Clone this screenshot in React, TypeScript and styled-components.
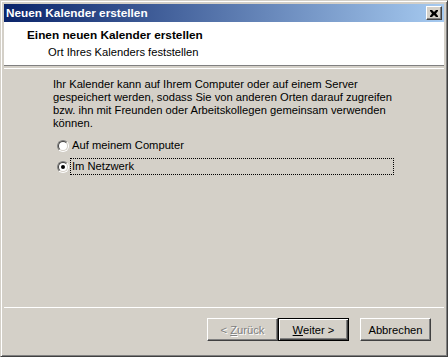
import React from "react";
import styled, { createGlobalStyle } from "styled-components";

const Global = createGlobalStyle`
  html, body { margin: 0; padding: 0; background: #d4d0c8; }
  body {
    font-family: "Liberation Sans", Arial, sans-serif;
    font-size: 11.2px;
    color: #000;
  }
`;

const Window = styled.div`
  box-sizing: border-box;
  width: 448px;
  height: 357px;
  background: #d4d0c8;
  border: 1px solid;
  border-color: #d4d0c8 #404040 #404040 #d4d0c8;
  box-shadow: inset 1px 1px #ffffff, inset -1px -1px #808080;
  padding: 3px;
  display: flex;
  flex-direction: column;
`;

const TitleBar = styled.div`
  height: 18px;
  flex: 0 0 18px;
  display: flex;
  align-items: center;
  justify-content: space-between;
  padding: 0 2px;
  background: linear-gradient(to right, #0a246a, #a6caf0);
`;

const TitleText = styled.span`
  color: #ffffff;
  font-weight: bold;
  font-size: 11.8px;
  line-height: 14px;
`;

const CloseButton = styled.div`
  box-sizing: border-box;
  width: 16px;
  height: 14px;
  background: #d4d0c8;
  border: 1px solid;
  border-color: #ffffff #404040 #404040 #ffffff;
  box-shadow: inset -1px -1px #808080;
  display: flex;
  align-items: center;
  justify-content: center;
`;

const Header = styled.div`
  height: 43px;
  flex: 0 0 43px;
  box-sizing: border-box;
  background: #ffffff;
  padding: 6px 0 0 23px;
  display: flex;
  flex-direction: column;
  gap: 3px;
`;

const HeaderTitle = styled.div`
  font-weight: bold;
  font-size: 11.8px;
  line-height: 14px;
`;

const HeaderSub = styled.div`
  line-height: 14px;
  padding-left: 21px;
`;

const Etched = styled.div<{ $top?: string }>`
  flex: 0 0 2px;
  height: 0;
  border-top: 1px solid ${(p) => p.$top ?? "#808080"};
  border-bottom: 1px solid #ffffff;
`;

const Body = styled.div`
  flex: 1;
  padding: 9px 0 0 49px;
  display: flex;
  flex-direction: column;
`;

const Paragraph = styled.p`
  margin: 0;
  line-height: 13px;
`;

const RadioGroup = styled.div`
  margin: 7px 0 0 4px;
  display: flex;
  flex-direction: column;
  gap: 4px;
`;

const RadioRow = styled.label`
  display: flex;
  align-items: center;
  height: 17px;
`;

const RadioOuter = styled.span`
  box-sizing: border-box;
  width: 12px;
  height: 12px;
  border-radius: 50%;
  border: 1px solid;
  border-color: #808080 #ffffff #ffffff #808080;
  display: flex;
`;

const RadioInner = styled.span`
  box-sizing: border-box;
  flex: 1;
  border-radius: 50%;
  border: 1px solid;
  border-color: #404040 #d4d0c8 #d4d0c8 #404040;
  background: #ffffff;
  display: flex;
  align-items: center;
  justify-content: center;
`;

const RadioDot = styled.span`
  width: 4px;
  height: 4px;
  border-radius: 50%;
  background: #000;
`;

const RadioLabel = styled.span<{ $focus?: boolean }>`
  box-sizing: border-box;
  margin-left: 1px;
  height: 17px;
  width: 324px;
  padding-left: 1px;
  line-height: 15px;
  border: 1px dotted ${(p) => (p.$focus ? "#000" : "transparent")};
`;

const Footer = styled.div`
  display: flex;
  flex-direction: column;
`;

const ButtonRow = styled.div`
  display: flex;
  justify-content: flex-end;
  padding: 10px 13px 12px 0;
`;

const Button = styled.button<{ $default?: boolean; $gapLeft?: number }>`
  box-sizing: border-box;
  width: 71px;
  height: 23px;
  margin: 0 0 0 ${(p) => p.$gapLeft ?? 0}px;
  padding: 0;
  background: #d4d0c8;
  font-family: "Liberation Sans", Arial, sans-serif;
  font-size: 11.2px;
  color: #000;
  border: 1px solid;
  border-color: ${(p) =>
    p.$default ? "#000" : "#ffffff #404040 #404040 #ffffff"};
  box-shadow: ${(p) =>
    p.$default
      ? "inset 1px 1px #ffffff, inset -1px -1px #404040, inset -2px -2px #808080"
      : "inset -1px -1px #808080"};
  &:disabled {
    color: #808080;
    text-shadow: 1px 1px #ffffff;
  }
  u {
    text-decoration: underline;
  }
`;

export default function App() {
  return (
    <>
      <Global />
      <Window>
        <TitleBar>
          <TitleText>Neuen Kalender erstellen</TitleText>
          <CloseButton>
            <svg width="8" height="7" viewBox="0 0 8 7">
              <path
                d="M0 0h2l2 2 2-2h2v1l-2 2.5 2 2.5v1h-2l-2-2-2 2h-2v-1l2-2.5-2-2.5z"
                fill="#000"
              />
            </svg>
          </CloseButton>
        </TitleBar>
        <Header>
          <HeaderTitle>Einen neuen Kalender erstellen</HeaderTitle>
          <HeaderSub>Ort Ihres Kalenders feststellen</HeaderSub>
        </Header>
        <Etched />
        <Body>
          <Paragraph>
            Ihr Kalender kann auf Ihrem Computer oder auf einem Server
            <br />
            gespeichert werden, sodass Sie von anderen Orten darauf zugreifen
            <br />
            bzw. ihn mit Freunden oder Arbeitskollegen gemeinsam verwenden
            <br />
            können.
          </Paragraph>
          <RadioGroup>
            <RadioRow>
              <RadioOuter>
                <RadioInner />
              </RadioOuter>
              <RadioLabel>Auf meinem Computer</RadioLabel>
            </RadioRow>
            <RadioRow>
              <RadioOuter>
                <RadioInner>
                  <RadioDot />
                </RadioInner>
              </RadioOuter>
              <RadioLabel $focus>Im Netzwerk</RadioLabel>
            </RadioRow>
          </RadioGroup>
        </Body>
        <Footer>
          <Etched $top="#d4d0c8" />
          <ButtonRow>
            <Button disabled>
              &lt; <u>Z</u>urück
            </Button>
            <Button $default>
              <u>W</u>eiter &gt;
            </Button>
            <Button $gapLeft={11}>Abbrechen</Button>
          </ButtonRow>
        </Footer>
      </Window>
    </>
  );
}
